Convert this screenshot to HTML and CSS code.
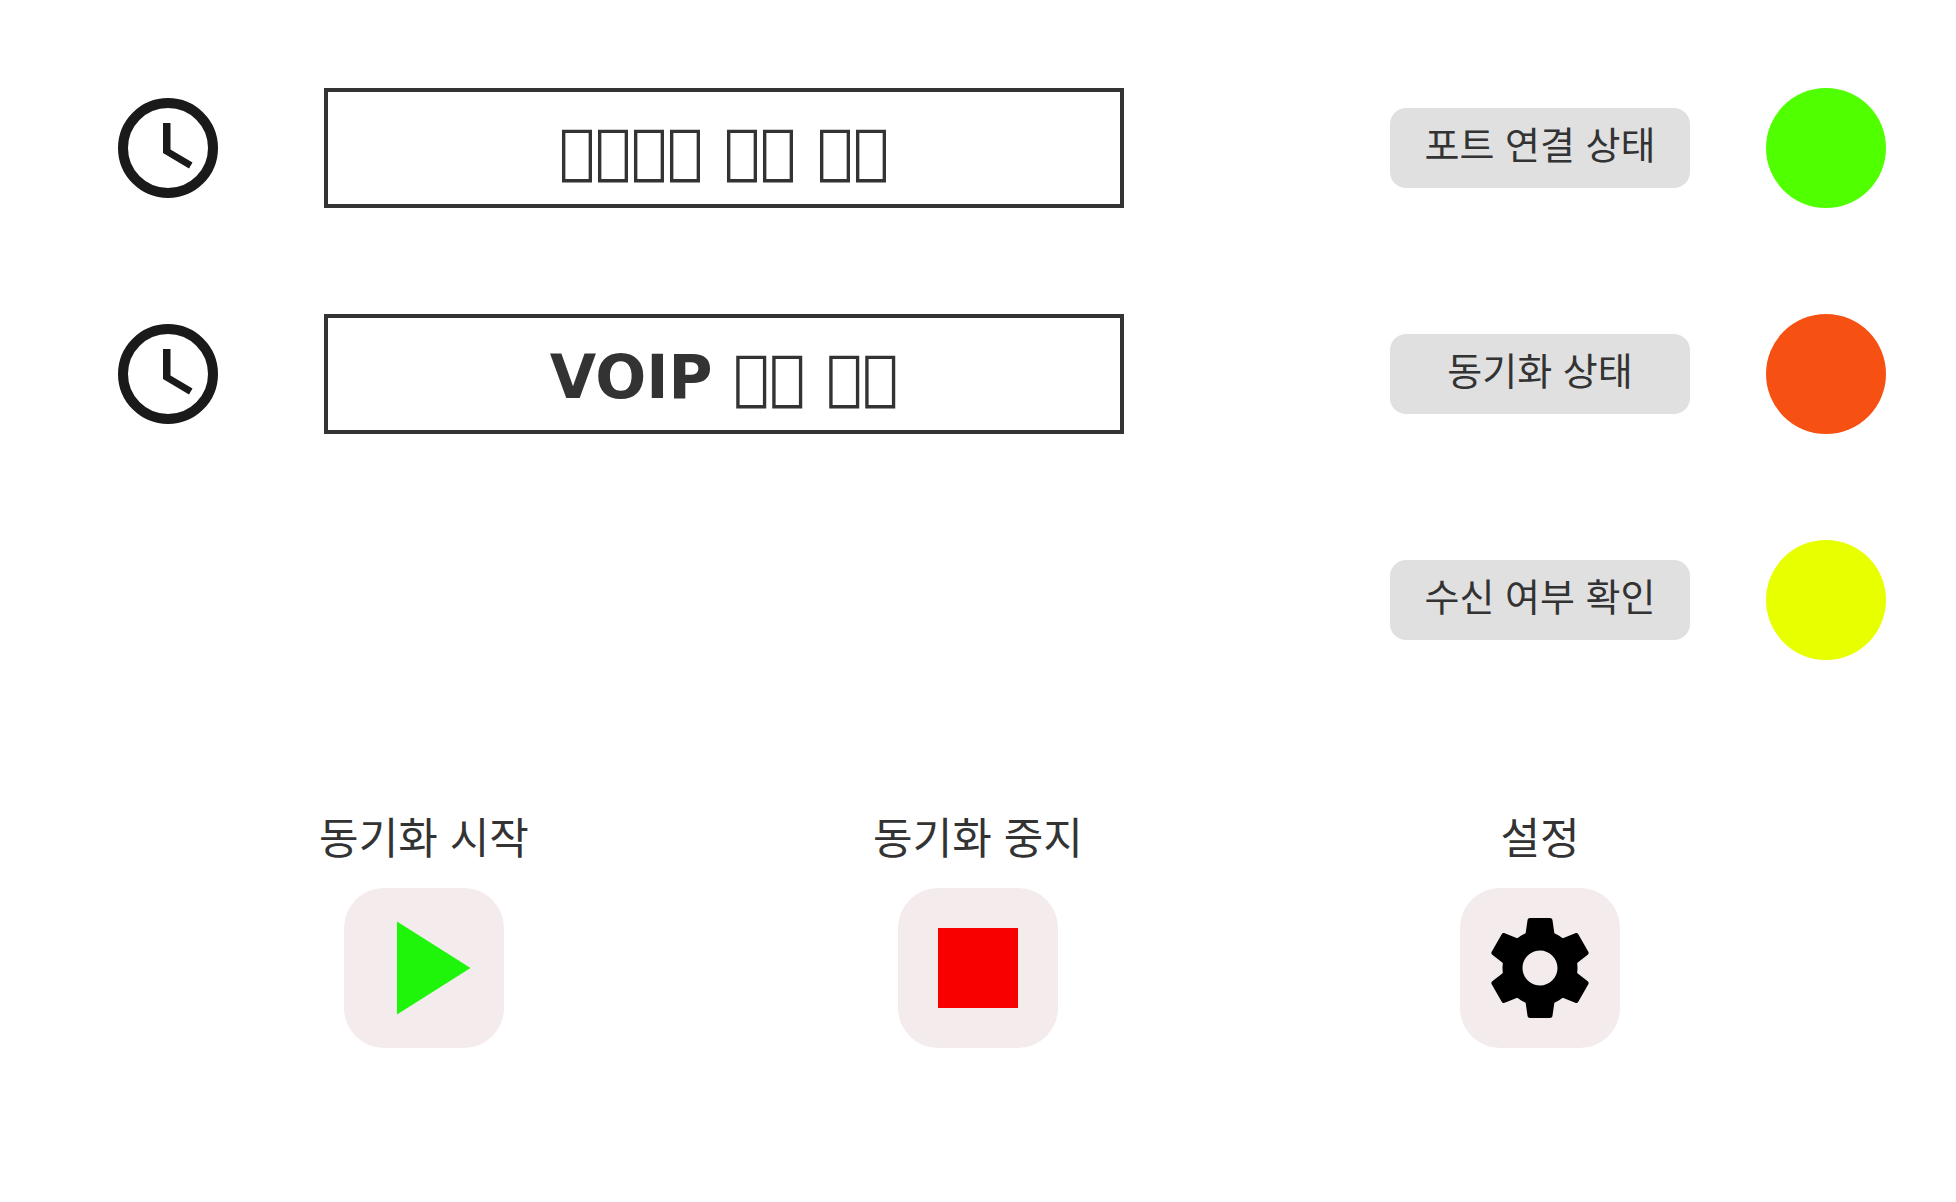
FILE: index.html
```html
<!DOCTYPE html>
<html lang="ko">
<head>
<meta charset="utf-8">
<meta name="viewport" content="width=device-width, initial-scale=1">
<title>동기화</title>
<link rel="stylesheet" href="styles.css">
</head>
<body>
<main class="panel">
  <section class="overview">
    <ul class="times">
      <li class="time">
        <svg class="clock" viewBox="0 0 100 100" aria-hidden="true">
          <circle class="clock-face" cx="50" cy="50" r="45"/>
          <path d="M45 25h7.500v26.500L74.500 64.500L71 70.500L45 55z"/>
        </svg>
        <p class="time-value">&#xE900;&#xE900;&#xE900;&#xE900; &#xE900;&#xE900; &#xE900;&#xE900;</p>
      </li>
      <li class="time">
        <svg class="clock" viewBox="0 0 100 100" aria-hidden="true">
          <circle class="clock-face" cx="50" cy="50" r="45"/>
          <path d="M45 25h7.500v26.500L74.500 64.500L71 70.500L45 55z"/>
        </svg>
        <p class="time-value">VOIP &#xE900;&#xE900; &#xE900;&#xE900;</p>
      </li>
    </ul>
    <ul class="states">
      <li class="state"><span class="state-name">포트 연결 상태</span><span class="lamp lamp-green"></span></li>
      <li class="state"><span class="state-name">동기화 상태</span><span class="lamp lamp-orange"></span></li>
      <li class="state"><span class="state-name">수신 여부 확인</span><span class="lamp lamp-yellow"></span></li>
    </ul>
  </section>
  <section class="actions">
    <div class="action">
      <label class="action-name" for="start">동기화 시작</label>
      <button class="action-button" id="start" type="button">
        <svg class="icon" viewBox="0 0 100 100" aria-hidden="true"><path class="play" d="M23 3.500L96.500 50L23 96.500z"/></svg>
      </button>
    </div>
    <div class="action">
      <label class="action-name" for="stop">동기화 중지</label>
      <button class="action-button" id="stop" type="button">
        <svg class="icon" viewBox="0 0 100 100" aria-hidden="true"><path class="stop" d="M10 10h80v80H10z"/></svg>
      </button>
    </div>
    <div class="action">
      <label class="action-name" for="settings">설정</label>
      <button class="action-button" id="settings" type="button">
        <svg class="icon" viewBox="2 2 20 20" aria-hidden="true"><path d="M19.430 12.980c.04-.32.07-.64.07-.98s-.03-.66-.07-.98l2.110-1.650c.19-.15.24-.42.12-.64l-2-3.460c-.12-.22-.39-.3-.61-.22l-2.490 1c-.52-.4-1.080-.73-1.690-.98l-.38-2.650C14.460 2.180 14.250 2 14 2h-4c-.25 0-.46.18-.49.42l-.38 2.650c-.61.25-1.170.59-1.690.98l-2.490-1c-.23-.09-.49 0-.61.22l-2 3.460c-.13.22-.07.49.12.64l2.110 1.650c-.04.32-.07.65-.07.98s.03.66.07.98l-2.110 1.650c-.19.15-.24.42-.12.64l2 3.460c.12.22.39.3.61.22l2.490-1c.52.4 1.080.73 1.690.98l.38 2.650c.03.24.24.42.49.42h4c.25 0 .46-.18.49-.42l.38-2.650c.61-.25 1.170-.59 1.690-.98l2.490 1c.23.09.49 0 .61-.22l2-3.460c.12-.22.07-.49-.12-.64l-2.110-1.650zM12 15.500c-1.930 0-3.500-1.570-3.500-3.500s1.570-3.500 3.500-3.500 3.500 1.570 3.500 3.500-1.570 3.500-3.500 3.500z"/></svg>
      </button>
    </div>
  </section>
</main>
</body>
</html>
```
FILE: styles.css
```css
* {
  box-sizing: border-box;
}

body {
  margin: 0;
  background: #fff;
  color: #333;
  font-family: "Noto Sans CJK KR", sans-serif;
}

.panel {
  display: flex;
  flex-direction: column;
  gap: 142px;
  padding: 88px 0;
}

.overview {
  display: flex;
  justify-content: space-between;
  align-items: flex-start;
  gap: 60px;
  padding: 0 70px 0 118px;
}

.times,
.states {
  display: flex;
  flex-direction: column;
  gap: 106px;
  margin: 0;
  padding: 0;
  list-style: none;
}

.times {
  flex: 0 1 1006px;
}

.time {
  display: flex;
  align-items: center;
  gap: 106px;
}

.clock {
  flex: none;
  width: 100px;
  height: 100px;
  fill: #1a1a1a;
}

.clock-face {
  fill: none;
  stroke: #1a1a1a;
  stroke-width: 10;
}

.time-value {
  flex: 1;
  height: 120px;
  margin: 0;
  border: 4px solid #333;
  font: bold 60px/118px "DejaVu Sans", sans-serif;
  text-align: center;
  white-space: nowrap;
}

.state {
  display: flex;
  align-items: center;
  gap: 76px;
}

.state-name {
  width: 300px;
  height: 80px;
  border-radius: 16px;
  background: #e0e0e0;
  font-size: 38px;
  line-height: 70px;
  text-align: center;
  white-space: nowrap;
}

.lamp {
  width: 120px;
  height: 120px;
  border-radius: 50%;
}

.lamp-green {
  background: #50ff00;
}

.lamp-orange {
  background: #f75013;
}

.lamp-yellow {
  background: #e8ff00;
}

.actions {
  display: grid;
  grid-template-columns: 554fr 554fr 570fr;
  padding: 0 131px 0 147px;
}

.action {
  display: flex;
  flex-direction: column;
  align-items: center;
  gap: 20px;
}

.action-name {
  font-size: 43px;
  line-height: 66px;
  white-space: nowrap;
}

.action-button {
  display: grid;
  place-items: center;
  width: 160px;
  height: 160px;
  padding: 0;
  border: 0;
  border-radius: 40px;
  background: #f4ebed;
}

.icon {
  width: 100px;
  height: 100px;
  overflow: visible;
}

.play {
  fill: #1ff50a;
}

.stop {
  fill: #f80000;
}
```
